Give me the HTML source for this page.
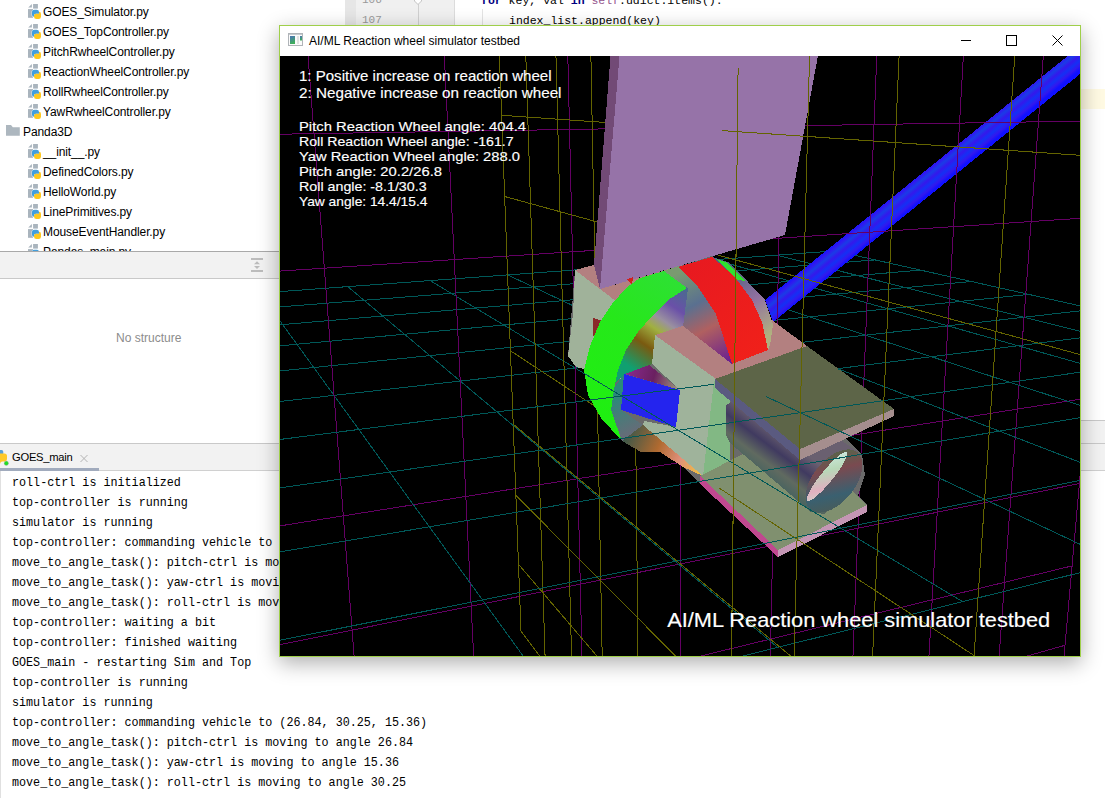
<!DOCTYPE html>
<html><head><meta charset="utf-8">
<style>
*{margin:0;padding:0;box-sizing:border-box}
html,body{width:1105px;height:798px;overflow:hidden;background:#fff;font-family:"Liberation Sans",sans-serif}
.a{position:absolute}
.tree{font-size:12px;letter-spacing:-0.1px;color:#000;white-space:pre}
.mono{font-family:"Liberation Mono",monospace;white-space:pre}
.con{font-size:12.6px;color:#000;left:12px;transform:scaleX(0.931);transform-origin:0 0}
</style></head><body>
<!-- project tree -->
<div class="a" style="left:0;top:0;width:345px;height:251px;background:#fff;overflow:hidden">
 <svg class="a" style="left:0;top:0" width="345" height="260">
  <defs>
   <g id="py">
    <path d="M0.2 3.4 L3.9 0 L3.9 3.4Z" fill="#a9b4bd"/>
    <rect x="5.1" y="0" width="4.8" height="4.6" fill="#a9b4bd"/>
    <rect x="0" y="5.1" width="5" height="8.7" fill="#a9b4bd"/>
    <path d="M3.6 10.5 L3.6 8 Q3.6 5.5 6.5 5.5 L8.5 5.5 Q11.3 5.5 11.3 8 L11.3 10.1 L8 10.1 Q6.3 10.1 6.3 11.7 L6.3 13.1 Q3.6 13.1 3.6 10.5Z" fill="#fff"/><path d="M3.9 10.5 L3.9 8 Q3.9 5.8 6.5 5.8 L8.5 5.8 Q11 5.8 11 8 L11 9.8 L8 9.8 Q6 9.8 6 11.5 L6 12.8 Q3.9 12.8 3.9 10.5Z" fill="#449fdc"/>
    <path d="M13 10 L13 12.8 Q13 15 10.5 15 L8.5 15 Q6 15 6 12.8 L6 11.6 Q6 9.8 8 9.8 L11 9.8 L11 7.8 Q13 7.8 13 10Z" fill="#ffc81e"/>
   </g>
   <path id="fold" d="M0 0Z"/>
  </defs>
  <use href="#py" x="28" y="4"/><use href="#py" x="28" y="24"/><use href="#py" x="28" y="44"/>
  <use href="#py" x="28" y="64"/><use href="#py" x="28" y="84"/><use href="#py" x="28" y="104"/>
  <path d="M6 125 L11 125 L12.8 127.2 L19.8 127.2 L19.8 135.8 L6 135.8Z" fill="#adb7bf"/>
  <use href="#py" x="28" y="144"/><use href="#py" x="28" y="164"/><use href="#py" x="28" y="184"/>
  <use href="#py" x="28" y="204"/><use href="#py" x="28" y="224"/><use href="#py" x="28" y="244"/>
 </svg>
 <div class="a tree" style="left:43px;top:5px">GOES_Simulator.py</div>
 <div class="a tree" style="left:43px;top:25px">GOES_TopController.py</div>
 <div class="a tree" style="left:43px;top:45px">PitchRwheelController.py</div>
 <div class="a tree" style="left:43px;top:65px">ReactionWheelController.py</div>
 <div class="a tree" style="left:43px;top:85px">RollRwheelController.py</div>
 <div class="a tree" style="left:43px;top:105px">YawRwheelController.py</div>
 <div class="a tree" style="left:23px;top:125px">Panda3D</div>
 <div class="a tree" style="left:43px;top:145px">__init__.py</div>
 <div class="a tree" style="left:43px;top:165px">DefinedColors.py</div>
 <div class="a tree" style="left:43px;top:185px">HelloWorld.py</div>
 <div class="a tree" style="left:43px;top:205px">LinePrimitives.py</div>
 <div class="a tree" style="left:43px;top:225px">MouseEventHandler.py</div>
 <div class="a tree" style="left:43px;top:245px">Pandas_main.py</div>
</div>
<!-- editor -->
<div class="a" style="left:345px;top:0;width:11px;height:420px;background:#e6e6e6"></div>
<div class="a" style="left:356px;top:0;width:99px;height:420px;background:#f0f0f0;border-right:1px solid #dcdcdc"></div>
<div class="a" style="left:418px;top:0;width:1px;height:420px;background:#d0d0d0"></div>
<div class="a" style="left:455px;top:89px;width:650px;height:20px;background:#fffae3"></div>
<svg class="a" style="left:410px;top:0" width="80" height="30">
 <path d="M4.5 -2 L4.5 1 L8 4.5 L11.5 1 L11.5 -2" fill="#fff" stroke="#c4c4c4" stroke-width="1"/>
 <path d="M72.5 9 V25" stroke="#e4e4e4" stroke-width="1"/>
</svg>
<div class="a mono" style="left:362px;top:-6.5px;font-size:11px;color:#999">106</div>
<div class="a mono" style="left:362px;top:13.5px;font-size:11px;color:#999">107</div>
<div class="a mono" style="left:481px;top:-6.5px;font-size:11.5px;color:#000"><b style="color:#000080">for</b> key, val <b style="color:#000080">in</b> <span style="color:#94558d">self</span>.udict.items():</div>
<div class="a mono" style="left:509px;top:13.5px;font-size:11.5px;color:#000">index_list.append(key)</div>
<!-- structure -->
<div class="a" style="left:0;top:251px;width:345px;height:1px;background:#a9a9a9"></div>
<div class="a" style="left:0;top:252px;width:345px;height:26px;background:#f2f2f2"></div>
<div class="a" style="left:0;top:278px;width:345px;height:1px;background:#c9c9c9"></div>
<div class="a" style="left:116px;top:331px;font-size:12px;color:#8c8c8c">No structure</div>
<svg class="a" style="left:248px;top:254px" width="20" height="22">
 <rect x="3" y="4" width="12" height="2" fill="#bcbcbc"/>
 <rect x="3" y="16" width="12" height="2" fill="#bcbcbc"/>
 <path d="M6 10.2 L9 7.2 L12 10.2Z" fill="#bcbcbc"/>
 <path d="M6 12 L9 15 L12 12Z" fill="#bcbcbc"/>
</svg>
<!-- right strip -->
<div class="a" style="left:1081px;top:420px;width:24px;height:1px;background:#c9c9c9"></div>
<div class="a" style="left:1081px;top:421px;width:24px;height:49px;background:#f2f2f2"></div>
<div class="a" style="left:1081px;top:443px;width:24px;height:1px;background:#c9c9c9"></div>
<!-- run tab bar -->
<div class="a" style="left:0;top:443px;width:1105px;height:1px;background:#c9c9c9"></div>
<div class="a" style="left:0;top:444px;width:1105px;height:26px;background:#f2f2f2"></div>
<div class="a" style="left:0;top:468px;width:99px;height:3px;background:#a1abbd"></div>
<div class="a" style="left:99px;top:470px;width:1006px;height:1px;background:#d0d0d0"></div>
<svg class="a" style="left:0;top:444px" width="100" height="26">
 <path d="M-2 6 L1.5 6 Q3.3 6 3.3 8 L3.3 12.4 L-2 12.4Z" fill="#5aa0d6"/>
 <path d="M-2 9.5 L4.5 9.5 Q7 9.5 7 12 L7 14.5 Q7 17.5 4.5 17.5 L2.5 17.5 Q0.5 17.5 0 19.7 L-2 19.7Z" fill="#ffc928"/>
 <circle cx="6.3" cy="19.3" r="2.2" fill="#22dd22" stroke="#c8a8c8" stroke-width="0.4"/>
 <path d="M80.5 11 L87.5 18 M87.5 11 L80.5 18" stroke="#b4b4b4" stroke-width="1"/>
</svg>
<div class="a tree" style="left:12px;top:451px;font-size:11.2px;letter-spacing:-0.25px">GOES_main</div>
<!-- console -->
<div class="a" style="left:0;top:471px;width:1px;height:327px;background:#e0e0e0"></div>
<div class="a mono con" style="top:476px">roll-ctrl is initialized</div>
<div class="a mono con" style="top:496px">top-controller is running</div>
<div class="a mono con" style="top:516px">simulator is running</div>
<div class="a mono con" style="top:536px">top-controller: commanding vehicle to (20.20, -8.10, 14.40)</div>
<div class="a mono con" style="top:556px">move_to_angle_task(): pitch-ctrl is moving to angle 20.20</div>
<div class="a mono con" style="top:576px">move_to_angle_task(): yaw-ctrl is moving to angle 14.40</div>
<div class="a mono con" style="top:596px">move_to_angle_task(): roll-ctrl is moving to angle -8.10</div>
<div class="a mono con" style="top:616px">top-controller: waiting a bit</div>
<div class="a mono con" style="top:636px">top-controller: finished waiting</div>
<div class="a mono con" style="top:656px">GOES_main - restarting Sim and Top</div>
<div class="a mono con" style="top:676px">top-controller is running</div>
<div class="a mono con" style="top:696px">simulator is running</div>
<div class="a mono con" style="top:716px">top-controller: commanding vehicle to (26.84, 30.25, 15.36)</div>
<div class="a mono con" style="top:736px">move_to_angle_task(): pitch-ctrl is moving to angle 26.84</div>
<div class="a mono con" style="top:756px">move_to_angle_task(): yaw-ctrl is moving to angle 15.36</div>
<div class="a mono con" style="top:776px">move_to_angle_task(): roll-ctrl is moving to angle 30.25</div>

<!-- floating window -->
<div class="a" id="win" style="left:279px;top:25px;width:802px;height:632px;border:1px solid #9fcf4a;background:#fff;box-shadow:0 6px 20px rgba(0,0,0,0.32)">
 <svg class="a" style="left:8px;top:7px" width="16" height="14">
  <defs><linearGradient id="icg" x1="0" y1="0" x2="0.3" y2="1"><stop offset="0" stop-color="#4a72b8"/><stop offset="1" stop-color="#3fae5a"/></linearGradient></defs>
  <rect x="0.5" y="0.5" width="14" height="12" fill="#fbfbfb" stroke="#b0b4b8" stroke-width="1"/>
  <rect x="1" y="1" width="13" height="1" fill="#c8ccd0"/>
  <rect x="2" y="3" width="5" height="8" fill="url(#icg)"/>
  <rect x="9" y="3" width="2" height="8" fill="#e2e2e2"/>
  <rect x="12" y="3" width="2" height="4.5" fill="url(#icg)"/>
 </svg>
 <div class="a" style="left:29px;top:8px;font-size:12px;color:#000">AI/ML Reaction wheel simulator testbed</div>
 <svg class="a" style="left:670px;top:0" width="132" height="30">
  <path d="M11 14.5 H21" stroke="#000" stroke-width="1"/>
  <rect x="56.5" y="9.5" width="10" height="10" fill="none" stroke="#000" stroke-width="1"/>
  <path d="M102.5 9.5 L112.5 19.5 M112.5 9.5 L102.5 19.5" stroke="#000" stroke-width="1"/>
 </svg>
 <div class="a" id="vp" style="left:0;top:30px;width:800px;height:600px;background:#000;overflow:hidden">
  <svg id="scene" width="800" height="600" viewBox="280 56 800 600" style="display:block">
  <defs>
   <linearGradient id="rodg" gradientUnits="userSpaceOnUse" x1="876" y1="209" x2="890" y2="226">
    <stop offset="0" stop-color="#1414ff"/><stop offset="0.15" stop-color="#3018f0"/><stop offset="0.32" stop-color="#1a3ce6"/>
    <stop offset="0.5" stop-color="#3418ec"/><stop offset="0.68" stop-color="#1430f4"/><stop offset="0.85" stop-color="#3218ee"/><stop offset="1" stop-color="#1010ff"/>
   </linearGradient>
   <linearGradient id="ringg" gradientUnits="userSpaceOnUse" x1="590" y1="420" x2="680" y2="280">
    <stop offset="0" stop-color="#1ef010"/><stop offset="0.6" stop-color="#26e81a"/><stop offset="1" stop-color="#2ee034"/>
   </linearGradient>
   <linearGradient id="redg" gradientUnits="userSpaceOnUse" x1="690" y1="270" x2="760" y2="350">
    <stop offset="0" stop-color="#e81a20"/><stop offset="1" stop-color="#f0201a"/>
   </linearGradient>
   <linearGradient id="hubg" gradientUnits="userSpaceOnUse" x1="700" y1="300" x2="620" y2="420">
    <stop offset="0" stop-color="#7a5a90"/><stop offset="0.3" stop-color="#8a9a60"/><stop offset="0.55" stop-color="#6a5020"/>
    <stop offset="0.75" stop-color="#208060"/><stop offset="1" stop-color="#507070"/>
   </linearGradient>
   <linearGradient id="backg" gradientUnits="userSpaceOnUse" x1="730" y1="270" x2="775" y2="330">
    <stop offset="0" stop-color="#506080"/><stop offset="0.5" stop-color="#9070a0"/><stop offset="1" stop-color="#b0b080"/>
   </linearGradient>
   <linearGradient id="botg" gradientUnits="userSpaceOnUse" x1="625" y1="440" x2="700" y2="475">
    <stop offset="0" stop-color="#405848"/><stop offset="0.4" stop-color="#b06a30"/><stop offset="0.7" stop-color="#e0907a"/><stop offset="1" stop-color="#f0c040"/>
   </linearGradient>
   <linearGradient id="cylg" gradientUnits="userSpaceOnUse" x1="760" y1="420" x2="730" y2="460">
    <stop offset="0" stop-color="#6a6070"/><stop offset="0.3" stop-color="#403a60"/><stop offset="0.6" stop-color="#606a60"/><stop offset="1" stop-color="#3a6060"/>
   </linearGradient>
   <linearGradient id="capg" gradientUnits="userSpaceOnUse" x1="860" y1="455" x2="815" y2="512">
    <stop offset="0" stop-color="#4a7048"/><stop offset="0.35" stop-color="#7a4a50"/><stop offset="0.7" stop-color="#3a6070"/><stop offset="1" stop-color="#505a50"/>
   </linearGradient>
   <linearGradient id="lensg" gradientUnits="userSpaceOnUse" x1="808" y1="500" x2="846" y2="453">
    <stop offset="0" stop-color="#c8e8d0"/><stop offset="0.3" stop-color="#e0b0c0"/><stop offset="0.6" stop-color="#b8d8b8"/><stop offset="1" stop-color="#d8f0f0"/>
   </linearGradient>
   <linearGradient id="purtri" gradientUnits="userSpaceOnUse" x1="625" y1="374" x2="680" y2="390">
    <stop offset="0" stop-color="#8a2a90"/><stop offset="0.5" stop-color="#6a2060"/><stop offset="1" stop-color="#a0a080"/>
   </linearGradient>
  </defs>
<g stroke-width="1" shape-rendering="crispEdges">
<line x1="65.8" y1="307.3" x2="835.0" y2="250.9" stroke="#005858"/>
<line x1="62.3" y1="324.1" x2="875.4" y2="259.9" stroke="#005858"/>
<line x1="58.3" y1="343.7" x2="920.6" y2="270.1" stroke="#005858"/>
<line x1="53.4" y1="366.9" x2="971.4" y2="281.5" stroke="#005858"/>
<line x1="47.7" y1="394.7" x2="1029.0" y2="294.4" stroke="#005858"/>
<line x1="40.6" y1="428.6" x2="1094.9" y2="309.2" stroke="#005858"/>
<line x1="31.8" y1="471.0" x2="1171.0" y2="326.3" stroke="#005858"/>
<line x1="20.5" y1="525.4" x2="1259.8" y2="346.2" stroke="#005858"/>
<line x1="5.4" y1="598.0" x2="1365.0" y2="369.8" stroke="#005858"/>
<line x1="-15.7" y1="699.4" x2="1491.3" y2="398.2" stroke="#005858"/>
<line x1="-47.2" y1="851.1" x2="1645.9" y2="432.9" stroke="#005858"/>
<line x1="65.8" y1="307.3" x2="-47.2" y2="851.1" stroke="#005858"/>
<line x1="166.1" y1="300.0" x2="287.4" y2="768.5" stroke="#005858"/>
<line x1="259.8" y1="293.1" x2="556.5" y2="702.0" stroke="#005858"/>
<line x1="347.7" y1="286.6" x2="777.7" y2="647.4" stroke="#005858"/>
<line x1="430.1" y1="280.6" x2="962.6" y2="601.7" stroke="#005858"/>
<line x1="507.6" y1="274.9" x2="1119.6" y2="562.9" stroke="#005858"/>
<line x1="580.7" y1="269.5" x2="1254.4" y2="529.6" stroke="#005858"/>
<line x1="649.6" y1="264.5" x2="1371.6" y2="500.7" stroke="#005858"/>
<line x1="714.8" y1="259.7" x2="1474.3" y2="475.3" stroke="#005858"/>
<line x1="776.5" y1="255.2" x2="1565.1" y2="452.9" stroke="#005858"/>
<line x1="835.0" y1="250.9" x2="1645.9" y2="432.9" stroke="#005858"/>
</g>
<g shape-rendering="crispEdges"><!-- rod -->
  <path d="M765 300 L1090 38 L1090 66 L773 322Z" fill="url(#rodg)"/>
  </g>
<g stroke-width="1" shape-rendering="crispEdges">
<line x1="124.8" y1="1020.3" x2="1058.2" y2="721.9" stroke="#640064"/>
<line x1="109.8" y1="914.7" x2="1065.0" y2="645.3" stroke="#640064"/>
<line x1="93.9" y1="803.2" x2="1072.1" y2="565.9" stroke="#640064"/>
<line x1="77.2" y1="685.5" x2="1079.4" y2="483.6" stroke="#640064"/>
<line x1="59.4" y1="560.8" x2="1087.0" y2="398.1" stroke="#640064"/>
<line x1="20.6" y1="288.2" x2="1103.1" y2="216.8" stroke="#640064"/>
<line x1="-0.6" y1="138.8" x2="1111.7" y2="120.6" stroke="#640064"/>
<line x1="-23.3" y1="-20.6" x2="1120.6" y2="20.5" stroke="#640064"/>
<line x1="-47.5" y1="-190.8" x2="1129.8" y2="-83.9" stroke="#640064"/>
<line x1="-73.5" y1="-373.2" x2="1139.5" y2="-192.9" stroke="#640064"/>
<line x1="124.8" y1="1020.3" x2="-73.5" y2="-373.2" stroke="#640064"/>
<line x1="256.0" y1="978.3" x2="113.4" y2="-345.4" stroke="#640064"/>
<line x1="375.9" y1="940.0" x2="279.1" y2="-320.8" stroke="#640064"/>
<line x1="485.8" y1="904.8" x2="427.0" y2="-298.8" stroke="#640064"/>
<line x1="587.1" y1="872.5" x2="559.9" y2="-279.0" stroke="#640064"/>
<line x1="680.6" y1="842.6" x2="679.9" y2="-261.2" stroke="#640064"/>
<line x1="767.2" y1="814.9" x2="788.8" y2="-245.0" stroke="#640064"/>
<line x1="847.7" y1="789.2" x2="888.1" y2="-230.2" stroke="#640064"/>
<line x1="922.7" y1="765.2" x2="979.0" y2="-216.7" stroke="#640064"/>
<line x1="992.7" y1="742.8" x2="1062.5" y2="-204.3" stroke="#640064"/>
<line x1="1058.2" y1="721.9" x2="1139.5" y2="-192.9" stroke="#640064"/>
<line x1="521.0" y1="631.2" x2="1043.8" y2="1323.8" stroke="#646400"/>
<line x1="518.5" y1="564.3" x2="1056.7" y2="1193.5" stroke="#646400"/>
<line x1="515.9" y1="495.4" x2="1070.7" y2="1053.5" stroke="#646400"/>
<line x1="513.2" y1="424.2" x2="1085.7" y2="902.7" stroke="#646400"/>
<line x1="510.5" y1="350.8" x2="1102.0" y2="739.6" stroke="#646400"/>
<line x1="504.7" y1="196.5" x2="1138.7" y2="370.7" stroke="#646400"/>
<line x1="501.6" y1="115.3" x2="1159.6" y2="160.8" stroke="#646400"/>
<line x1="498.5" y1="31.4" x2="1182.6" y2="-69.3" stroke="#646400"/>
<line x1="495.2" y1="-55.5" x2="1207.8" y2="-322.6" stroke="#646400"/>
<line x1="491.8" y1="-145.5" x2="1235.7" y2="-602.9" stroke="#646400"/>
<line x1="521.0" y1="631.2" x2="491.8" y2="-145.5" stroke="#646400"/>
<line x1="545.3" y1="663.4" x2="518.8" y2="-162.1" stroke="#646400"/>
<line x1="572.7" y1="699.7" x2="549.8" y2="-181.2" stroke="#646400"/>
<line x1="603.8" y1="740.9" x2="586.0" y2="-203.5" stroke="#646400"/>
<line x1="639.4" y1="788.1" x2="628.7" y2="-229.7" stroke="#646400"/>
<line x1="728.7" y1="906.3" x2="742.3" y2="-299.5" stroke="#646400"/>
<line x1="785.6" y1="981.8" x2="820.0" y2="-347.3" stroke="#646400"/>
<line x1="854.2" y1="1072.6" x2="919.6" y2="-408.6" stroke="#646400"/>
<line x1="938.2" y1="1184.0" x2="1051.8" y2="-489.9" stroke="#646400"/>
<line x1="1043.8" y1="1323.8" x2="1235.7" y2="-602.9" stroke="#646400"/>
</g>
<g shape-rendering="crispEdges"><!-- purple panel -->
  <path d="M611 50 L620 50 L600 290 L592 290Z" fill="#724a76"/>
  <path d="M620 50 L819 50 L785 235 L600 289Z" fill="#9673a8"/>
  </g>
<g shape-rendering="crispEdges"><!-- filler -->
  <path d="M568 356 L575 270 L594 265 L600 289 L690 263 L712 256 L748 282 L773 325 L807 346 L894 409 L894 416 L845 437 L862 455 L865 475 L858 495 L867 505 L867 512 L778 557 L700 484 L683 467 L661 452 L641 452 L622 441 L601 418 L585 370Z" fill="#6a6a6a"/>
  <!-- left box -->
  <path d="M575 270 L594 265 L600 289 L690 263 L662 272 L641 278 L625 289 L617 302Z" fill="#b38080"/>
  <path d="M627 279 L633 277 L632 285Z" fill="#d02020"/>
  <path d="M575 270 L625 308 L625 380 L576 367 L568 356 L573 314Z" fill="#a0b29a"/>
  <path d="M593 318 L603 321 L593 337Z" fill="#8a2a2a"/>
  <!-- center pink top -->
  <path d="M655 335 L745 300 L807 346 L716 379Z" fill="#b38080"/>
  <!-- hub -->
  <linearGradient id="h1g" gradientUnits="userSpaceOnUse" x1="686" y1="290" x2="632" y2="368">
   <stop offset="0" stop-color="#4a6a90"/><stop offset="0.22" stop-color="#6a50a8"/><stop offset="0.4" stop-color="#9a90a0"/>
   <stop offset="0.52" stop-color="#a0b040"/><stop offset="0.72" stop-color="#7a5a10"/><stop offset="1" stop-color="#10a070"/>
  </linearGradient>
  <linearGradient id="h2g" gradientUnits="userSpaceOnUse" x1="680" y1="272" x2="728" y2="362">
   <stop offset="0" stop-color="#7a9a70"/><stop offset="0.35" stop-color="#5a7090"/><stop offset="0.62" stop-color="#b06060"/><stop offset="1" stop-color="#6a2090"/>
  </linearGradient>
  <linearGradient id="h4g" gradientUnits="userSpaceOnUse" x1="615" y1="395" x2="635" y2="435">
   <stop offset="0" stop-color="#2a8a7a"/><stop offset="1" stop-color="#6a6a78"/>
  </linearGradient>
  <path d="M690 285 L664 300 L646 318 L634 330 L624 346 L616 368 L614 384 L625 374 L649 365 L652 364 L655 335 L683 326 L683.5 323Z" fill="url(#h1g)"/>
  <path d="M660 272 L678 266 L696 284 L716 314 L732 364 L683 326 L683.5 323 L688 288Z" fill="url(#h2g)"/>
  <path d="M614 388 L611 410 L622 441 L643 425 L621 410 L624 374Z" fill="url(#h4g)"/>
  <!-- back ring -->
  <path d="M712 257 L728 262 L748 282 L765 300 L773 325 L770 345 L768 350 L752 300 L734 276Z" fill="url(#backg)"/>
  <path d="M716 259 L728 263 L745 281 L738 280Z" fill="#30e030"/>
  <!-- red arc -->
  <path d="M678 267 L712 257 L734 276 L752 300 L762 322 L768 350 L732 364 L716 314 L696 284Z" fill="url(#redg)"/>
  <!-- green ring -->
  <path d="M622 441 L601 418 L588 395 L584 370 L590 346 L600 322 L612 304 L626 288 L640 278 L664 271 L687 288 L668 300 L652 316 L638 332 L626 350 L618 370 L614 390 L611 410Z" fill="url(#ringg)"/>
  <!-- blue square + purple tri -->
  <path d="M625 374 L649 365 L680 390Z" fill="url(#purtri)"/>
  <path d="M624 374 L680 390 L676 427 L621 410Z" fill="#2424ee"/>
  <!-- center gray-green face -->
  <path d="M655 335 L716 379 L714 381 L703 476 L643 425 L644 421 L676 427 L680 390 L652 364Z" fill="#9fb39b"/>
  <path d="M714 381 L730 391 L730 463 L703 476Z" fill="#82b884"/>
  <!-- bottom orange -->
  <path d="M622 441 L643 425 L703 476 L683 467 L660 452 L641 452Z" fill="url(#botg)"/>
  <!-- lower plate -->
  <path d="M700 476 L790 430 L867 505 L778 550Z" fill="#80906f"/>
  <path d="M700 476 L778 550 L778 557 L700 484Z" fill="#c0488f"/>
  <path d="M778 550 L867 505 L867 512 L778 557Z" fill="#c496b4"/>
  <!-- cylinder -->
  <path d="M726 405 L735 400 L842 441 L858 452 L860 480 L824 514 L811 512 L730 443 L726 435Z" fill="url(#cylg)"/>
  <ellipse cx="834" cy="481" rx="37" ry="21" transform="rotate(-51 834 481)" fill="url(#capg)"/>
  <ellipse cx="827" cy="476.5" rx="31" ry="6" transform="rotate(-51 827 476.5)" fill="url(#lensg)"/>
  <!-- upper plate -->
  <path d="M715 379 L807 346 L894 409 L800 449Z" fill="#5d6548"/>
  <path d="M715 379 L800 449 L800 460 L715 388Z" fill="#5a5a80"/>
  <path d="M800 449 L894 409 L894 416 L800 460Z" fill="#a58e8e"/>
</g>
<g stroke-width="1" shape-rendering="crispEdges">
<line x1="31.8" y1="471.0" x2="714.0" y2="384.3" stroke="#005858"/>
<line x1="20.5" y1="525.4" x2="1259.8" y2="346.2" stroke="#005858"/>
<line x1="5.4" y1="598.0" x2="1365.0" y2="369.8" stroke="#005858"/>
<line x1="-15.7" y1="699.4" x2="1491.3" y2="398.2" stroke="#005858"/>
<line x1="-47.2" y1="851.1" x2="1645.9" y2="432.9" stroke="#005858"/>
<line x1="39.0" y1="436.3" x2="-47.2" y2="851.1" stroke="#005858"/>
<line x1="196.7" y1="418.1" x2="287.4" y2="768.5" stroke="#005858"/>
<line x1="338.6" y1="401.6" x2="556.5" y2="702.0" stroke="#005858"/>
<line x1="467.0" y1="386.8" x2="777.7" y2="647.4" stroke="#005858"/>
<line x1="583.8" y1="373.2" x2="962.6" y2="601.7" stroke="#005858"/>
<line x1="765.8" y1="396.4" x2="1119.6" y2="562.9" stroke="#005858"/>
<line x1="837.5" y1="368.6" x2="1254.4" y2="529.6" stroke="#005858"/>
<line x1="931.5" y1="356.7" x2="1371.6" y2="500.7" stroke="#005858"/>
<line x1="1017.9" y1="345.7" x2="1474.3" y2="475.3" stroke="#005858"/>
<line x1="1097.5" y1="335.6" x2="1565.1" y2="452.9" stroke="#005858"/>
<line x1="1171.0" y1="326.3" x2="1645.9" y2="432.9" stroke="#005858"/>
<line x1="715.9" y1="889.4" x2="1043.8" y2="1323.8" stroke="#646400"/>
<line x1="716.7" y1="796.0" x2="1056.7" y2="1193.5" stroke="#646400"/>
<line x1="717.4" y1="698.1" x2="1070.7" y2="1053.5" stroke="#646400"/>
<line x1="718.3" y1="595.6" x2="1085.7" y2="902.7" stroke="#646400"/>
<line x1="719.1" y1="488.0" x2="1102.0" y2="739.6" stroke="#646400"/>
<line x1="721.0" y1="255.9" x2="1138.7" y2="370.7" stroke="#646400"/>
<line x1="722.0" y1="130.6" x2="1159.6" y2="160.8" stroke="#646400"/>
<line x1="723.1" y1="-1.7" x2="1182.6" y2="-69.3" stroke="#646400"/>
<line x1="724.2" y1="-141.4" x2="1207.8" y2="-322.6" stroke="#646400"/>
<line x1="725.4" y1="-289.2" x2="1235.7" y2="-602.9" stroke="#646400"/>
<line x1="728.7" y1="906.3" x2="738.1" y2="68.0" stroke="#646400"/>
<line x1="785.6" y1="981.8" x2="820.0" y2="-347.3" stroke="#646400"/>
<line x1="854.2" y1="1072.6" x2="919.6" y2="-408.6" stroke="#646400"/>
<line x1="938.2" y1="1184.0" x2="1051.8" y2="-489.9" stroke="#646400"/>
<line x1="1043.8" y1="1323.8" x2="1235.7" y2="-602.9" stroke="#646400"/>
</g>
<g fill="#ffffff" stroke="#ffffff" stroke-width="0.15" font-family="Liberation Sans">
<text x="299" y="80.6" font-size="14.2" textLength="252.5" lengthAdjust="spacingAndGlyphs">1: Positive increase on reaction wheel</text>
<text x="299" y="98.4" font-size="14.2" textLength="262.5" lengthAdjust="spacingAndGlyphs">2: Negative increase on reaction wheel</text>
<text x="299" y="131.4" font-size="13.6" textLength="227" lengthAdjust="spacingAndGlyphs">Pitch Reaction Wheel angle: 404.4</text>
<text x="299" y="146.3" font-size="13.6" textLength="214.6" lengthAdjust="spacingAndGlyphs">Roll Reaction Wheel angle: -161.7</text>
<text x="299" y="161.3" font-size="13.6" textLength="221" lengthAdjust="spacingAndGlyphs">Yaw Reaction Wheel angle: 288.0</text>
<text x="299" y="176.3" font-size="13.6" textLength="143" lengthAdjust="spacingAndGlyphs">Pitch angle: 20.2/26.8</text>
<text x="299" y="191.3" font-size="13.6" textLength="127.6" lengthAdjust="spacingAndGlyphs">Roll angle: -8.1/30.3</text>
<text x="299" y="206.3" font-size="13.6" textLength="128.4" lengthAdjust="spacingAndGlyphs">Yaw angle: 14.4/15.4</text>
<text x="667.2" y="626.7" font-size="19.6" textLength="383" lengthAdjust="spacingAndGlyphs">AI/ML Reaction wheel simulator testbed</text>
</g>
</svg>
 </div>
</div>
</body></html>
